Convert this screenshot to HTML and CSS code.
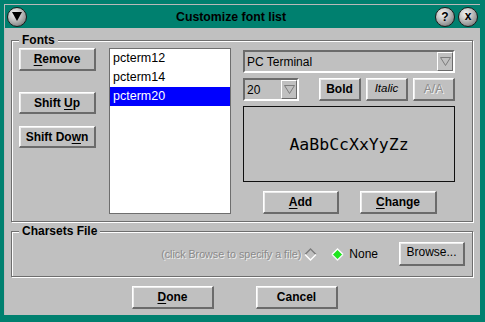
FILE: index.html
```html
<!DOCTYPE html>
<html>
<head>
<meta charset="utf-8">
<link rel="stylesheet" href="styles.css">
</head>
<body>
<div class="frame">
  <div class="window">
    <div class="titlebar">
      <span class="tbtn"><svg width="10" height="9" viewBox="0 0 10 9"><polygon points="0,0 10,0 5,9" fill="#000"/></svg></span>
      <span class="title">Customize font list</span>
      <span class="tbtn help">?</span>
      <span class="tbtn close">x</span>
    </div>
    <div class="content">
      <div class="group fonts">
        <span class="group-title">Fonts</span>
        <div class="left-col">
          <button class="btn btn-remove"><u>R</u>emove</button>
          <button class="btn btn-up">Shift <u>U</u>p</button>
          <button class="btn btn-down">Shift Do<u>w</u>n</button>
        </div>
        <div class="list">
          <div class="item">pcterm12</div>
          <div class="item">pcterm14</div>
          <div class="item selected">pcterm20</div>
        </div>
        <div class="right-col">
          <div class="combo combo-family">
            <span class="combo-text">PC Terminal</span>
            <span class="combo-arrow"><svg width="11" height="9" viewBox="0 0 11 9"><polygon points="0.5,0.5 10.5,0.5 5.5,8.5" fill="none" stroke="#7c7c7c"/></svg></span>
          </div>
          <div class="style-row">
            <div class="combo combo-size">
              <span class="combo-text">20</span>
              <span class="combo-arrow"><svg width="11" height="9" viewBox="0 0 11 9"><polygon points="0.5,0.5 10.5,0.5 5.5,8.5" fill="none" stroke="#7c7c7c"/></svg></span>
            </div>
            <div class="style-buttons">
              <button class="btn btn-small">Bold</button>
              <button class="btn btn-small btn-italic">Italic</button>
              <button class="btn btn-small btn-disabled">A/A</button>
            </div>
          </div>
          <div class="preview">AaBbCcXxYyZz</div>
          <div class="add-row">
            <button class="btn btn-add"><u>A</u>dd</button>
            <button class="btn btn-change"><u>C</u>hange</button>
          </div>
        </div>
      </div>
      <div class="group charsets">
        <span class="group-title">Charsets File</span>
        <span class="hint">(click Browse to specify a file)</span>
        <svg class="radio-empty" width="13" height="13" viewBox="0 0 13 13"><polyline points="1,6.5 6.5,1 12,6.5" fill="none" stroke="#7c7c7c" stroke-width="1.4"/><polyline points="1,6.5 6.5,12 12,6.5" fill="none" stroke="#fff" stroke-width="1.4"/></svg>
        <svg class="radio-on" width="13" height="13" viewBox="0 0 13 13"><polygon points="6.5,1 12,6.5 6.5,12 1,6.5" fill="#1ee61e"/><polyline points="1,6.5 6.5,1 12,6.5" fill="none" stroke="#fff" stroke-width="1.4"/><polyline points="1,6.5 6.5,12 12,6.5" fill="none" stroke="#f4f4f4" stroke-width="1.4"/></svg>
        <span class="radio-label">None</span>
        <button class="btn-browse">Browse...</button>
      </div>
      <div class="actions">
        <button class="btn btn-action"><u>D</u>one</button>
        <button class="btn btn-action">Cancel</button>
      </div>
    </div>
  </div>
</div>
</body>
</html>
```
FILE: styles.css
```css
html, body {
  margin: 0;
  padding: 0;
}
body {
  width: 485px;
  height: 322px;
  overflow: hidden;
  font-family: "Liberation Sans", Arial, sans-serif;
  font-size: 12px;
}
.frame {
  box-sizing: border-box;
  width: 485px;
  height: 322px;
  background: #00806f;
  padding: 4px 5px 7px 4px;
}
.window {
  box-sizing: border-box;
  height: 311px;
  border-top: 1px solid #b9b9b9;
  border-left: 1px solid #b9b9b9;
  display: flex;
  flex-direction: column;
}
.titlebar {
  height: 23px;
  background: #00806f;
  display: flex;
  align-items: center;
  padding: 0 2px;
  box-sizing: border-box;
}
.tbtn {
  box-sizing: border-box;
  width: 20px;
  height: 20px;
  border-radius: 50%;
  border: 1px solid #1c1c1c;
  background: radial-gradient(circle at 38% 32%, #f2f2f2 0%, #cfcfcf 30%, #9a9a9a 65%, #5a5a5a 100%);
  display: flex;
  align-items: center;
  justify-content: center;
  font-weight: bold;
  font-size: 13px;
  color: #000;
  line-height: 1;
}
.tbtn.help { margin-right: 3px; font-size: 12px; }
.tbtn.close { font-size: 12px; padding-bottom: 2px; }
.title {
  flex: 1;
  text-align: center;
  font-weight: bold;
  font-size: 12.3px;
  color: #000;
}
.content {
  flex: 1;
  background: #c0c0c0;
  padding: 12px 7px 0 6px;
  display: flex;
  flex-direction: column;
}
.group {
  position: relative;
  box-sizing: border-box;
  border: 1px solid #6e6e6e;
  box-shadow: inset 1px 1px 0 #fff, 1px 1px 0 #fff;
}
.group-title {
  position: absolute;
  top: -8px;
  left: 7px;
  background: #c0c0c0;
  padding: 0 3px;
  font-weight: bold;
  font-size: 12px;
  line-height: 14px;
  color: #000;
}
.fonts {
  height: 182px;
  display: flex;
  padding: 7px 17px 7px 7px;
}
.left-col {
  width: 77px;
  display: flex;
  flex-direction: column;
  margin-right: 13px;
}
.btn {
  box-sizing: border-box;
  font-family: "Liberation Sans", Arial, sans-serif;
  font-weight: bold;
  font-size: 12px;
  color: #000;
  background: #c0c0c0;
  border-style: solid;
  border-width: 1px 2px 2px 1px;
  border-color: #fff #6b6b6b #6b6b6b #fff;
  box-shadow: inset 1px 1px 0 #ececec;
  padding: 0;
  margin: 0;
  height: 23px;
  line-height: 1;
}
.btn u { text-underline-offset: 2px; }
.left-col .btn { width: 77px; }
.btn-up { margin-top: 21px; height: 22px; }
.btn-down { margin-top: 12px; height: 22px; }
.list {
  box-sizing: border-box;
  width: 122px;
  height: 166px;
  background: #fff;
  border: 1px solid #6e6e6e;
  margin-right: 12px;
}
.item {
  height: 19px;
  line-height: 19px;
  padding-left: 3px;
  font-size: 12.5px;
  color: #000;
}
.item.selected {
  background: #0000ff;
  color: #fff;
}
.right-col {
  width: 212px;
  display: flex;
  flex-direction: column;
}
.combo {
  box-sizing: border-box;
  height: 23px;
  display: flex;
  align-items: center;
  border-style: solid;
  border-width: 2px;
  border-color: #6b6b6b #fff #fff #6b6b6b;
  padding-left: 2px;
}
.combo-family { margin-top: 2px; }
.combo-text {
  font-size: 12px;
  color: #000;
  flex: 1;
}
.combo-arrow {
  box-sizing: border-box;
  width: 16px;
  height: 19px;
  border-style: solid;
  border-width: 1px;
  border-color: #fff #6b6b6b #6b6b6b #fff;
  display: flex;
  align-items: center;
  justify-content: center;
}
.style-row {
  display: flex;
  margin-top: 5px;
}
.combo-size { width: 56px; }
.style-buttons {
  margin-left: auto;
  display: flex;
  gap: 5px;
}
.btn-small { width: 42px; }
.btn-italic { font-weight: normal; font-style: italic; font-size: 11.5px; }
.btn-disabled {
  font-weight: normal;
  color: #8c8c8c;
  text-shadow: 1px 1px 0 #f2f2f2;
}
.preview {
  box-sizing: border-box;
  height: 76px;
  margin-top: 5px;
  border: 1px solid #101010;
  display: flex;
  align-items: center;
  justify-content: center;
  font-family: "DejaVu Sans Mono", monospace;
  font-size: 16.5px;
  color: #000;
}
.add-row {
  display: flex;
  justify-content: center;
  gap: 21px;
  margin-top: 9px;
  padding-left: 2px;
}
.btn-add { width: 76px; }
.btn-change { width: 77px; }
.charsets {
  height: 46px;
  margin-top: 9px;
  display: flex;
  align-items: center;
  justify-content: flex-end;
  padding-right: 7px;
}
.hint {
  color: #8a8a8a;
  text-shadow: 1px 1px 0 #ededed;
  font-size: 10.7px;
  margin-right: 3px;
}
.radio-empty { margin-right: 14px; }
.radio-on { margin-right: 5px; }
.radio-label {
  font-size: 12px;
  color: #000;
  margin-right: 21px;
}
.btn-browse {
  box-sizing: border-box;
  width: 66px;
  height: 24px;
  font-family: "Liberation Sans", Arial, sans-serif;
  font-size: 12px;
  color: #000;
  background: #c0c0c0;
  border-style: solid;
  border-width: 1px 2px 2px 1px;
  border-color: #fff #6b6b6b #6b6b6b #fff;
  box-shadow: inset 1px 1px 0 #ececec;
  padding: 0 0 3px 0;
  margin: 0;
}
.actions {
  display: flex;
  gap: 42px;
  margin-top: 9px;
  padding-left: 121px;
}
.btn-action { width: 82px; }
```
